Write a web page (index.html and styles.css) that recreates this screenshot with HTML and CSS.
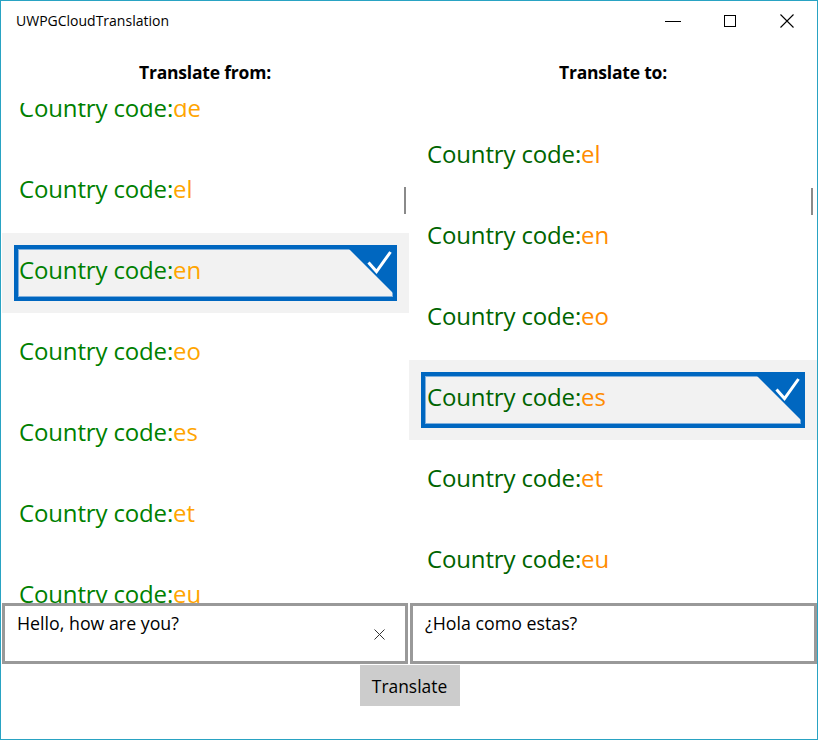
FILE: index.html
```html
<!DOCTYPE html>
<html lang="en">
<head>
<meta charset="utf-8">
<title>UWPGCloudTranslation</title>
<link rel="stylesheet" href="styles.css">
</head>
<body>
<div class="window">
  <header class="titlebar">
    <span class="app-title">UWPGCloudTranslation</span>
    <div class="caption">
      <span class="cap-btn"><svg width="16" height="12" viewBox="0 0 16 12"><path d="M0 6.5H16" stroke="#000" stroke-width="1"/></svg></span>
      <span class="cap-btn"><svg width="12" height="12" viewBox="0 0 12 12"><rect x="0.5" y="0.5" width="11" height="11" fill="none" stroke="#000" stroke-width="1"/></svg></span>
      <span class="cap-btn"><svg width="14" height="14" viewBox="0 0 14 14"><path d="M0.5 0.5L13.5 13.5M13.5 0.5L0.5 13.5" stroke="#000" stroke-width="1.1"/></svg></span>
    </div>
  </header>

  <div class="panes">
    <section class="pane pane-from">
      <h2 class="pane-title">Translate from:</h2>
      <div class="list">
        <ul class="items items-from">
          <li class="item"><div class="item-box"><span class="lbl">Country code:</span><span class="code">de</span></div></li>
          <li class="item"><div class="item-box"><span class="lbl">Country code:</span><span class="code">el</span></div></li>
          <li class="item selected"><div class="item-box"><span class="lbl">Country code:</span><span class="code">en</span>
            <svg class="check" width="44" height="44" viewBox="0 0 44 44"><polygon points="0,0 44,0 44,44" fill="#0067c0"/><path d="M19.5 13.5L27.5 22.5L41.5 3" fill="none" stroke="#fff" stroke-width="3"/></svg></div></li>
          <li class="item"><div class="item-box"><span class="lbl">Country code:</span><span class="code">eo</span></div></li>
          <li class="item"><div class="item-box"><span class="lbl">Country code:</span><span class="code">es</span></div></li>
          <li class="item"><div class="item-box"><span class="lbl">Country code:</span><span class="code">et</span></div></li>
          <li class="item"><div class="item-box"><span class="lbl">Country code:</span><span class="code">eu</span></div></li>
        </ul>
        <div class="thumb thumb-from"></div>
      </div>
    </section>

    <section class="pane pane-to">
      <h2 class="pane-title">Translate to:</h2>
      <div class="list">
        <ul class="items items-to">
          <li class="item"><div class="item-box"><span class="lbl">Country code:</span><span class="code">el</span></div></li>
          <li class="item"><div class="item-box"><span class="lbl">Country code:</span><span class="code">en</span></div></li>
          <li class="item"><div class="item-box"><span class="lbl">Country code:</span><span class="code">eo</span></div></li>
          <li class="item selected"><div class="item-box"><span class="lbl">Country code:</span><span class="code">es</span>
            <svg class="check" width="44" height="44" viewBox="0 0 44 44"><polygon points="0,0 44,0 44,44" fill="#0067c0"/><path d="M19.5 13.5L27.5 22.5L41.5 3" fill="none" stroke="#fff" stroke-width="3"/></svg></div></li>
          <li class="item"><div class="item-box"><span class="lbl">Country code:</span><span class="code">et</span></div></li>
          <li class="item"><div class="item-box"><span class="lbl">Country code:</span><span class="code">eu</span></div></li>
        </ul>
        <div class="thumb thumb-to"></div>
      </div>
    </section>
  </div>

  <div class="inputs">
    <div class="textbox textbox-from">
      <span class="tb-text">Hello, how are you?</span>
      <svg class="clear" width="11" height="11" viewBox="0 0 11 11"><path d="M0.5 0.5L10.5 10.5M10.5 0.5L0.5 10.5" stroke="#333" stroke-width="1"/></svg>
    </div>
    <div class="textbox textbox-to">
      <span class="tb-text">¿Hola como estas?</span>
    </div>
  </div>

  <div class="actions">
    <button class="translate-btn" type="button">Translate</button>
  </div>
</div>
</body>
</html>
```

FILE: styles.css
```css
* { box-sizing: border-box; }

html, body {
  margin: 0;
  padding: 0;
  background: #fff;
}

body {
  font-family: "Open Sans", "Noto Sans", sans-serif;
  color: #000;
}

.window {
  width: 818px;
  height: 740px;
  border: 1px solid #29a3c3;
  background: #fff;
  display: flex;
  flex-direction: column;
  overflow: hidden;
}

.titlebar {
  height: 39px;
  display: flex;
  align-items: center;
  justify-content: space-between;
  padding-left: 15px;
  flex: none;
}

.app-title {
  font-size: 14px;
  line-height: 18px;
  margin-top: 1px;
}

.caption {
  display: flex;
  align-items: center;
  height: 100%;
  padding-right: 2px;
}

.cap-btn {
  width: 57px;
  display: flex;
  justify-content: center;
  align-items: center;
  height: 100%;
}

.panes {
  display: grid;
  grid-template-columns: 408px 408px;
  flex: none;
}

.pane {
  display: flex;
  flex-direction: column;
  min-width: 0;
}

.pane-title {
  margin: 0;
  height: 63px;
  padding-top: 21px;
  font-size: 17.5px;
  line-height: 22px;
  font-weight: 700;
  text-align: center;
  letter-spacing: -0.2px;
}

.list {
  position: relative;
  height: 500px;
  overflow: hidden;
}

.items {
  list-style: none;
  margin: 0;
  padding: 0;
}

.items-from {
  margin-top: -32px;
  padding-left: 1px;
}

.items-to {
  margin-top: 14px;
}

.item {
  height: 80px;
  margin-bottom: 1px;
  padding: 12px;
}

.item.selected {
  background: #f2f2f2;
}

.item-box {
  position: relative;
  height: 56px;
  border: 4px solid transparent;
  padding: 0 0 7px 1px;
  display: flex;
  align-items: center;
  font-size: 24px;
  letter-spacing: -0.15px;
  white-space: nowrap;
}

.item.selected .item-box {
  border-color: #0067c0;
  box-shadow: inset 0 0 0 1px #7fb0de;
}

.check {
  position: absolute;
  top: 0;
  right: 0;
  display: block;
}

.items-from .lbl { color: #008000; }
.items-from .code { color: #ffa500; }
.items-to .lbl { color: #006400; }
.items-to .code { color: #ff8c00; }

.items-to .item-box { padding-left: 2px; }

.thumb {
  position: absolute;
  width: 2px;
  height: 27px;
  background: #8a8a8a;
}

.thumb-from { right: 3px; top: 84px; }
.thumb-to { right: 4px; top: 85px; }

.inputs {
  display: grid;
  grid-template-columns: 408px 408px;
  height: 61px;
  flex: none;
}

.textbox {
  position: relative;
  border: 3px solid #999;
  padding: 6px 12px 0 12px;
  font-size: 17.8px;
  line-height: 22px;
  color: #000;
}

.textbox-from { margin: 0 1px; }
.textbox-to { margin-left: 1px; }

.clear {
  position: absolute;
  right: 20px;
  top: 50%;
  margin-top: -5px;
}

.actions {
  display: flex;
  justify-content: center;
  padding-top: 1px;
  flex: none;
}

.translate-btn {
  width: 100px;
  height: 41px;
  border: none;
  background: #cccccc;
  font-family: "Open Sans", "Noto Sans", sans-serif;
  font-size: 17.4px;
  color: #000;
  padding: 0;
  margin-left: 1px;
}
```
